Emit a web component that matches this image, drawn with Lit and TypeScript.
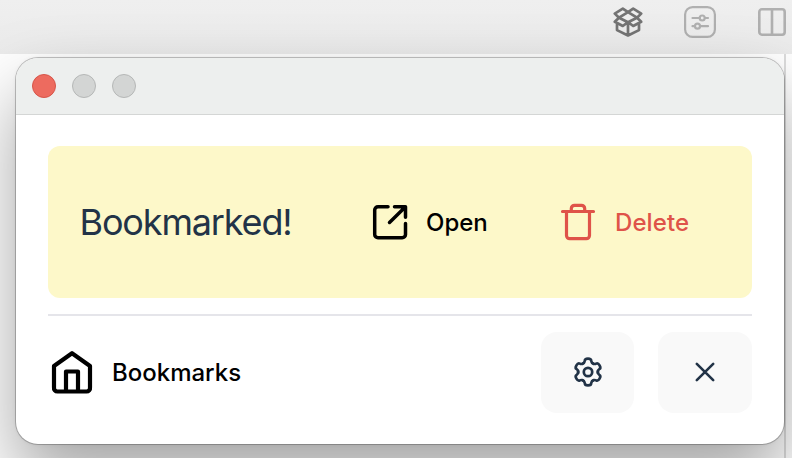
import { LitElement, html, css, svg } from "lit";
import { customElement } from "lit/decorators.js";

const box = html`<svg class="box" width="30" height="32" viewBox="0 0 30 32" fill="none" stroke="#747474" stroke-width="2.7" stroke-linejoin="round" stroke-linecap="round">
  <path d="M15 6.200 9.800 2.600 1.800 7.600 6 11.700 1.800 15.800 9.800 20 15 16.200 20.200 20 28.200 15.800 24 11.700 28.200 7.600 20.200 2.600ZM15 6.200 6 11.700 15 16.200 24 11.700ZM4 18.500v5.600l11 5.400 11-5.400V18.500M15 17v12"/></svg>`;

const sliders = html`<svg width="32" height="32" viewBox="0 0 32 32" fill="none" stroke="#b0b0b0" stroke-width="2.200">
  <rect x="1.100" y="1.100" width="29.800" height="29.800" rx="7.500"/>
  <path d="M8.500 12h7M21 12h3M8.500 20.200h2.500M16 20.200h8" stroke-linecap="round"/>
  <circle cx="18.200" cy="12" r="2.500"/><circle cx="13.500" cy="20.200" r="2.500"/></svg>`;

const panels = html`<svg class="panels" width="28" height="28" viewBox="0 0 28 28" fill="none" stroke="#b0b0b0" stroke-width="2.6">
  <rect x="1.300" y="1.300" width="25.400" height="25.400" rx="2.600"/><path d="M14 1v26"/></svg>`;

const openIcon = html`<svg width="36" height="36" viewBox="0 0 36 36" fill="none" stroke="#000" stroke-width="3.500" stroke-linejoin="round" stroke-linecap="round">
  <path d="M16 2.700H6A3.300 3.300 0 0 0 2.700 6v24.400A3.300 3.300 0 0 0 6 33.700h24.200a3.300 3.300 0 0 0 3.300-3.300V19.500M22.500 2.700h11v10.500M33 3.200 17.500 18.400"/></svg>`;

const trash = html`<svg width="36" height="40" viewBox="0 0 36 40" fill="none" stroke="#df5349" stroke-width="3.200" stroke-linecap="round" stroke-linejoin="round">
  <path d="M2.500 9.500h31M6.500 9.500v24a3.200 3.200 0 0 0 3.200 3.200h16.600a3.200 3.200 0 0 0 3.200-3.200V9.500M11.300 9V6.500a3.200 3.200 0 0 1 3.200-3.200h7a3.200 3.200 0 0 1 3.200 3.200V9"/></svg>`;

const home = html`<svg width="48" height="48" viewBox="0 0 48 48" fill="none" stroke="#000" stroke-width="4.200" stroke-linejoin="round">
  <path d="M6 17v21.500A3.500 3.500 0 0 0 9.500 42.500h29a3.500 3.500 0 0 0 3.500-4V17L24 4.200ZM18 42.500V22.500h12v20"/></svg>`;

const tooth = (a: number) => svg`<path transform="rotate(${a})" d="M-5.500 -8.100C-4.400 -8.700 -3.200 -9.500 -3.200 -11.200C-3.200 -14.100 3.200 -14.100 3.200 -11.200C3.200 -9.500 4.400 -8.700 5.500 -8.100"/>`;
const gear = html`<svg class="gear" width="32" height="32" viewBox="-16 -16 32 32" fill="none" stroke="#223347" stroke-width="2.700" stroke-linecap="round">
  ${[0, 60, 120, 180, 240, 300].map(tooth)}<circle r="4.200"/></svg>`;

const close = html`<svg class="close" width="24" height="24" viewBox="0 0 24 24" fill="none" stroke="#223347" stroke-width="2.600" stroke-linecap="round">
  <path d="m3.800 3.800 16.400 16.400M20.200 3.800 3.800 20.200"/></svg>`;

@customElement("app-root")
export class AppRoot extends LitElement {
  static styles = css`
    :host { display: block; width: 792px; height: 458px; overflow: hidden; position: relative; background: #fff; font-family: Inter, "Liberation Sans", sans-serif; }
    * { box-sizing: border-box; }
    svg { display: block; flex: none; }
    .toolbar { height: 54px; background: linear-gradient(#efefef, #ebebeb); display: flex; justify-content: flex-end; align-items: flex-start; padding: 6px 6px 0 0; }
    .toolbar svg { margin-left: 42px; }
    .toolbar svg.box { margin-right: -1px; }
    .toolbar svg.panels { margin-top: 2px; }
    .edge { position: absolute; left: 784px; top: 54px; width: 2px; height: 404px; background: #dcdcdc; }
    .window { position: absolute; left: 16px; top: 58px; width: 768px; height: 386px; border-radius: 22px; background: #fff; overflow: hidden; box-shadow: 0 0 0 1px rgba(0,0,0,.22), 0 0 4px rgba(0,0,0,.08), 0 36px 72px rgba(0,0,0,.36); }
    .titlebar { height: 57px; background: #edefee; border-bottom: 1px solid #d4d6d5; display: flex; gap: 16px; padding: 16px; }
    .dot { width: 24px; height: 24px; border-radius: 50%; background: #d3d5d4; border: 1px solid #b5b7b6; }
    .dot.red { background: #ed6b5f; border-color: #d65549; }
    .content { padding: 31px 32px 0; }
    .notice { height: 152px; border-radius: 12px; background: #fdf8c9; display: flex; align-items: center; padding-left: 32px; }
    .title { width: 292px; font-size: 36px; line-height: 48px; letter-spacing: -1.150px; text-indent: -.5px; color: #223347; white-space: nowrap; }
    .action { display: flex; align-items: center; font-size: 24px; line-height: 32px; font-weight: 500; color: #000; white-space: nowrap; }
    .notice .action span { padding-top: 2px; }
    .open { width: 188px; gap: 18px; }
    .delete { color: #df5349; gap: 19px; letter-spacing: .1px; }
    .footer { margin-top: 16px; border-top: 2px solid #e5e5ea; padding-top: 16px; display: flex; align-items: center; gap: 24px; }
    .bookmarks { flex: 1; gap: 16px; }
    .bookmarks span { padding-top: 1px; }
    .button { width: 93px; height: 81px; border-radius: 16px; background: #f9f9f9; border: 0; padding: 0; display: flex; align-items: center; justify-content: center; }
    .button:last-child { width: 94px; }
    .gear, .close { margin-bottom: 1px; }
  `;
  render() {
    return html`
      <div class="toolbar">${box}${sliders}${panels}</div>
      <div class="edge"></div>
      <div class="window">
        <div class="titlebar"><span class="dot red"></span><span class="dot"></span><span class="dot"></span></div>
        <div class="content">
          <div class="notice">
            <div class="title">Bookmarked!</div>
            <div class="action open">${openIcon}<span>Open</span></div>
            <div class="action delete">${trash}<span>Delete</span></div>
          </div>
          <div class="footer">
            <div class="action bookmarks">${home}<span>Bookmarks</span></div>
            <button class="button" aria-label="Settings">${gear}</button>
            <button class="button" aria-label="Close">${close}</button>
          </div>
        </div>
      </div>`;
  }
}
